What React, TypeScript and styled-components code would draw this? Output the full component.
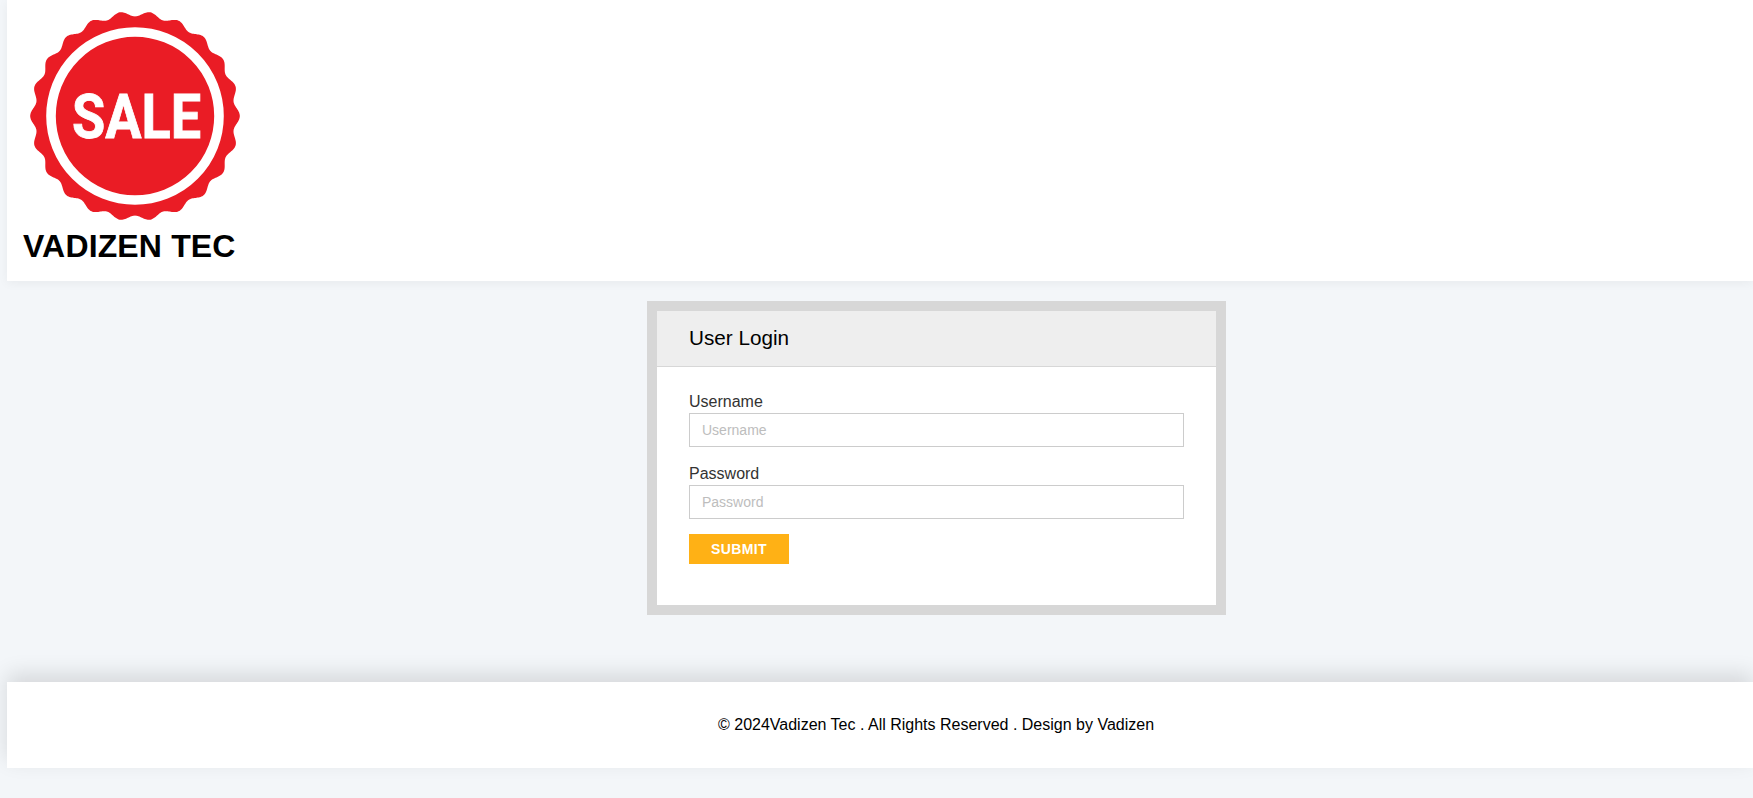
import React from "react";
import styled, { createGlobalStyle } from "styled-components";

const Global = createGlobalStyle`
  html, body { margin: 0; padding: 0; background: #f3f6f9; }
  body { font-family: "Liberation Sans", Arial, sans-serif; }
  * { box-sizing: border-box; }
`;

const Page = styled.div`
  min-height: 798px;
  padding-left: 7px;
  overflow: hidden;
`;

const Header = styled.header`
  height: 281px;
  background: #fff;
  box-shadow: 0 2px 10px rgba(0, 0, 0, 0.05);
  display: flex;
  flex-direction: column;
  padding: 10px 0 0 16px;
`;

const BrandName = styled.div`
  font-size: 32px;
  font-weight: 700;
  line-height: 37px;
  color: #000;
  letter-spacing: 0.15px;
  margin-top: 8px;
`;

const Main = styled.main`
  padding: 20px 0 67px 640px;
`;

const Card = styled.section`
  width: 579px;
  height: 314px;
  border: 10px solid #d7d7d7;
  background: #fff;
`;

const CardTitle = styled.h2`
  margin: 0;
  height: 56px;
  padding: 0 32px 2px;
  display: flex;
  align-items: center;
  background: #eeeeee;
  border-bottom: 1px solid #d7d7d7;
  font-size: 20.7px;
  font-weight: 400;
  color: #000;
`;

const Form = styled.form`
  padding: 23px 32px 0;
  display: flex;
  flex-direction: column;
`;

const Field = styled.div`
  display: flex;
  flex-direction: column;
  margin-bottom: 15px;
`;

const Label = styled.label`
  font-size: 16px;
  line-height: 23px;
  color: #333;
`;

const Input = styled.input`
  width: 495px;
  height: 34px;
  border: 1px solid #ccc;
  background: #fff;
  padding: 0 12px;
  font-family: inherit;
  font-size: 14px;
  outline: none;
  &::placeholder { color: #bdbdbd; opacity: 1; }
`;

const Submit = styled.button`
  width: 100px;
  height: 30px;
  border: 0;
  background: #ffb115;
  color: #fff;
  font-family: inherit;
  font-size: 14px;
  font-weight: 700;
  letter-spacing: 0.35px;
`;

const Footer = styled.footer`
  height: 86px;
  background: #fff;
  box-shadow: 0 -8px 20px rgba(0, 0, 0, 0.12);
  display: flex;
  align-items: center;
  padding-left: 711px;
  font-size: 16px;
  color: #000;
`;

function badgePath(): string {
  const cx = 110;
  const cy = 106;
  const pts: string[] = [];
  for (let i = 0; i < 720; i++) {
    const a = (i / 720) * Math.PI * 2;
    const r = 102.2 + 2.6 * Math.cos(22 * a);
    pts.push(`${(cx + r * Math.cos(a)).toFixed(2)},${(cy + r * Math.sin(a)).toFixed(2)}`);
  }
  return `M${pts.join("L")}Z`;
}

const Logo = () => (
  <svg width="220" height="210" viewBox="0 0 220 210" style={{ display: "block", marginLeft: 2 }}>
    <path d={badgePath()} fill="#ea1c25" />
    <circle cx="110" cy="106" r="84" fill="#ea1c25" stroke="#fff" strokeWidth="9.6" />
    <text
      x="47"
      y="128"
      fill="#fff"
      stroke="#fff"
      strokeWidth="0.8"
      fontFamily="Roboto, sans-serif"
      fontWeight="700"
      fontSize="61"
      textLength="129"
      lengthAdjust="spacingAndGlyphs"
    >
      SALE
    </text>
  </svg>
);

export default function App() {
  return (
    <Page>
      <Global />
      <Header>
        <Logo />
        <BrandName>VADIZEN TEC</BrandName>
      </Header>
      <Main>
        <Card>
          <CardTitle>User Login</CardTitle>
          <Form>
            <Field>
              <Label>Username</Label>
              <Input placeholder="Username" />
            </Field>
            <Field>
              <Label>Password</Label>
              <Input placeholder="Password" type="password" />
            </Field>
            <Submit type="button">SUBMIT</Submit>
          </Form>
        </Card>
      </Main>
      <Footer>© 2024Vadizen Tec . All Rights Reserved . Design by Vadizen</Footer>
    </Page>
  );
}
